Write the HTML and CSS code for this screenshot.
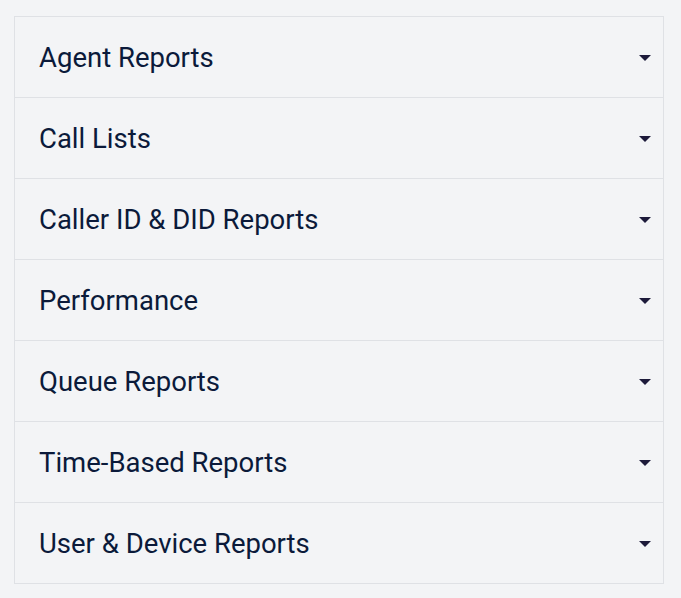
FILE: index.html
```html
<!DOCTYPE html>
<html lang="en">
<head>
    <meta charset="UTF-8">
    <meta name="viewport" content="width=device-width, initial-scale=1.0">
    <title>Reports</title>
    <link rel="stylesheet" href="styles.css">
</head>
<body>
    <div class="report-list">
        <div class="report-row"><span>Agent Reports</span><i class="caret"></i></div>
        <div class="report-row"><span>Call Lists</span><i class="caret"></i></div>
        <div class="report-row"><span>Caller ID &amp; DID Reports</span><i class="caret"></i></div>
        <div class="report-row"><span>Performance</span><i class="caret"></i></div>
        <div class="report-row"><span>Queue Reports</span><i class="caret"></i></div>
        <div class="report-row"><span>Time-Based Reports</span><i class="caret"></i></div>
        <div class="report-row"><span>User &amp; Device Reports</span><i class="caret"></i></div>
    </div>
</body>
</html>
```

FILE: styles.css
```css
body {
    margin: 0;
    padding: 16px 0 0 14px;
    background: #f3f4f6;
    font-family: Roboto, 'Liberation Sans', sans-serif;
}
.report-list {
    width: 648px;
    border: 1px solid #dfe1e5;
    background: #f3f4f6;
}
.report-row {
    display: flex;
    align-items: center;
    justify-content: space-between;
    height: 80px;
    padding: 0 12px 0 24px;
    border-top: 1px solid #dfe1e5;
    color: #0b1a3a;
    font-size: 27.5px;
}
.report-row:first-child {
    border-top: none;
}
.caret {
    width: 0;
    height: 0;
    margin-top: 2px;
    border-left: 6px solid transparent;
    border-right: 6px solid transparent;
    border-top: 6px solid #1d1a3a;
}
```
